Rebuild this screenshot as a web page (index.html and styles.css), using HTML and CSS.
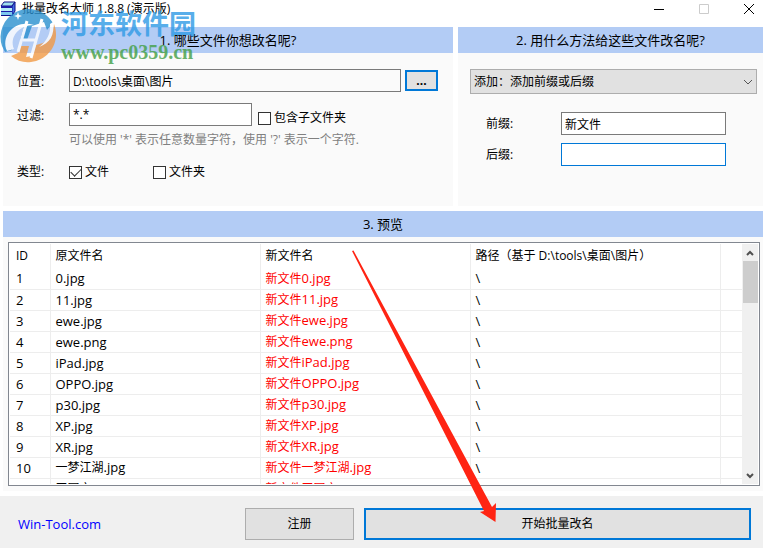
FILE: index.html
```
<!DOCTYPE html>
<html lang="zh-CN">
<head>
  <meta charset="UTF-8">
  <title>批量改名大师 1.8.8 (演示版)</title>
  <link rel="stylesheet" href="styles.css">
</head>
<body>

  <!-- Title bar -->
  <header class="titlebar">
    <svg class="app-icon" width="16" height="16" viewBox="0 0 16 16">
      <path d="M4 1h11l-3 4H1z" fill="#9fe0ee" stroke="#10108a"/>
      <path d="M12 5l3-4v9l-3 5z" fill="#3d6be0" stroke="#10108a"/>
      <path d="M1 5h11v2H1z" fill="#1c1ca8"/>
      <path d="M1 7h11v3H1z" fill="#b8eef8"/>
      <path d="M1 10h11v1H1z" fill="#1c1ca8"/>
      <path d="M1 11h11v3H1z" fill="#7cc8ee"/>
      <path d="M1 14h11v1H1z" fill="#10108a"/>
    </svg>
    <h1>批量改名大师 1.8.8 (演示版)</h1>
    <div class="window-buttons">
      <button type="button" aria-label="最小化"><svg width="10" height="10"><path d="M0 5.5h10" stroke="#000"/></svg></button>
      <button type="button" aria-label="最大化" disabled><svg width="10" height="10"><path d="M.5.5h9v9h-9z" fill="none" stroke="#ccc"/></svg></button>
      <button type="button" aria-label="关闭"><svg width="10" height="10"><path d="M0 0l10 10M10 0L0 10" stroke="#000"/></svg></button>
    </div>
  </header>

  <main class="content">
    <div class="options">
      <!-- 1. Files -->
      <section class="panel files">
        <h2>1. 哪些文件你想改名呢?</h2>
        <form class="files-form">
          <label class="field-label" for="path">位置:</label>
          <div class="line">
            <input class="text path" type="text" id="path" value="D:\tools\桌面\图片">
            <button class="browse" type="button">...</button>
          </div>
          <label class="field-label" for="filter">过滤:</label>
          <div class="line">
            <input class="text filter" type="text" id="filter" value="*.*">
            <label class="check low"><input type="checkbox">包含子文件夹</label>
          </div>
          <p class="hint">可以使用 '*' 表示任意数量字符，使用 '?' 表示一个字符.</p>
          <span class="type-label">类型:</span>
          <div class="line types">
            <label class="check"><input type="checkbox" checked>文件</label>
            <label class="check"><input type="checkbox">文件夹</label>
          </div>
        </form>
      </section>

      <!-- 2. Method -->
      <section class="panel method">
        <h2>2. 用什么方法给这些文件改名呢?</h2>
        <form class="method-form">
          <div class="select-wrap">
            <select aria-label="改名方法">
              <option>添加：添加前缀或后缀</option>
            </select>
            <svg width="10" height="6"><path d="M1 1l4 4 4-4" fill="none" stroke="#555"/></svg>
          </div>
          <div class="method-fields">
            <label for="prefix">前缀:</label>
            <input class="text" type="text" id="prefix" value="新文件">
            <label for="suffix">后缀:</label>
            <input class="text active" type="text" id="suffix">
          </div>
        </form>
      </section>
    </div>

    <!-- 3. Preview -->
    <section class="panel preview">
      <h2>3. 预览</h2>
      <div class="list">
        <div class="list-rows">
          <table>
            <colgroup>
              <col class="col-id"><col class="col-name"><col class="col-name"><col class="col-path"><col>
            </colgroup>
            <thead>
              <tr><th>ID</th><th>原文件名</th><th>新文件名</th><th>路径（基于 D:\tools\桌面\图片）</th><th></th></tr>
            </thead>
            <tbody>
              <tr><td>1</td><td>0.jpg</td><td class="new">新文件<span>0.jpg</span></td><td>\</td><td></td></tr>
              <tr><td>2</td><td>11.jpg</td><td class="new">新文件<span>11.jpg</span></td><td>\</td><td></td></tr>
              <tr><td>3</td><td>ewe.jpg</td><td class="new">新文件<span>ewe.jpg</span></td><td>\</td><td></td></tr>
              <tr><td>4</td><td>ewe.png</td><td class="new">新文件<span>ewe.png</span></td><td>\</td><td></td></tr>
              <tr><td>5</td><td>iPad.jpg</td><td class="new">新文件<span>iPad.jpg</span></td><td>\</td><td></td></tr>
              <tr><td>6</td><td>OPPO.jpg</td><td class="new">新文件<span>OPPO.jpg</span></td><td>\</td><td></td></tr>
              <tr><td>7</td><td>p30.jpg</td><td class="new">新文件<span>p30.jpg</span></td><td>\</td><td></td></tr>
              <tr><td>8</td><td>XP.jpg</td><td class="new">新文件<span>XP.jpg</span></td><td>\</td><td></td></tr>
              <tr><td>9</td><td>XR.jpg</td><td class="new">新文件<span>XR.jpg</span></td><td>\</td><td></td></tr>
              <tr><td>10</td><td class="cjk">一梦江湖<span>.jpg</span></td><td class="new">新文件一梦江湖<span>.jpg</span></td><td>\</td><td></td></tr>
              <tr><td></td><td class="cjk">王国之<span>.jpg</span></td><td class="new">新文件王国之<span>.jpg</span></td><td></td><td></td></tr>
            </tbody>
          </table>
        </div>
        <div class="scrollbar">
          <svg width="8" height="6"><path d="M1 5l3-3 3 3" fill="none" stroke="#505050" stroke-width="2"/></svg>
          <div class="thumb"></div>
          <svg width="8" height="6"><path d="M1 1l3 3 3-3" fill="none" stroke="#505050" stroke-width="2"/></svg>
        </div>
      </div>
    </section>
  </main>

  <footer class="footer">
    <a href="#">Win-Tool.com</a>
    <button class="register" type="button">注册</button>
    <button class="start" type="button">开始批量改名</button>
  </footer>

  <!-- Watermark -->
  <div class="watermark">
    <svg width="58" height="58" viewBox="0 0 58 58">
      <path d="M2 40A28 28 0 0 1 16 6C30 -1 46 5 53 17L47 24L44 16L32 20L27 34L20 34L24 20C14 24 10 34 12 44L5 46z" fill="#2a90cf"/>
      <path d="M54 18C61 36 49 54 31 56C24 57 17 55 11 50L18 47L21 40H29L26 51L32 50L36 39L43 37C49 33 53 27 54 18z" fill="#f29a45"/>
      <path d="M27 15l-9 31M42 13L31 52M23 34h13" fill="none" stroke="#fff" stroke-width="3"/>
      <path d="M7 45C0 29 16 13 34 19C19 19 9 31 14 43z" fill="#fff"/>
      <path d="M53 16c2 13-3 21-14 25 8-6 12-14 11-23z" fill="#fff"/>
      <path d="M18 6l1 3 3 1-3 1-1 3-1-3-3-1 3-1z" fill="#fff"/>
    </svg>
    <div class="watermark-text">
      <strong>河东软件园</strong>
      <b>www.pc0359.cn</b>
    </div>
  </div>

  <!-- Arrow to the start button -->
  <svg class="arrow" width="146" height="274" viewBox="0 0 146 274">
    <path d="M0 1L1.500 .5L140 257l4-4-.5 19-15.500-10 4-1z" fill="#ff2413"/>
  </svg>

</body>
</html>
```

FILE: styles.css
```
* {
  box-sizing: border-box;
}
body {
  display: flex;
  flex-direction: column;
  height: 100vh;
  margin: 0;
  position: relative;
  overflow: hidden;
  background: #fff;
  color: #000;
  font: 12px/18px "Open Sans", "Noto Sans CJK SC", sans-serif;
}
button, input, select {
  font: inherit;
  color: inherit;
  margin: 0;
}
h1, h2, p {
  margin: 0;
  font-weight: normal;
}

/* Title bar */
.titlebar {
  display: flex;
  height: 27px;
  flex: none;
}
.app-icon {
  margin-top: 1px;
}
.titlebar h1 {
  flex: 1;
  margin-left: 6px;
  font-size: 12px;
  line-height: 18px;
}
.window-buttons {
  display: flex;
  gap: 35px;
  height: 18px;
  padding-right: 9px;
}
.window-buttons button {
  display: flex;
  align-items: center;
  width: 10px;
  padding: 0;
  border: 0;
  background: none;
}

/* Panels */
.content {
  display: flex;
  flex-direction: column;
  flex: 1;
  gap: 5px;
  min-height: 0;
  padding-left: 3px;
}
.options {
  display: flex;
  gap: 5px;
  height: 179px;
  flex: none;
}
.panel {
  background: #fafafa;
}
.panel h2 {
  height: 26px;
  background: #b3ccf5;
  font-size: 13px;
  line-height: 26px;
  text-align: center;
}
.files {
  flex: 450;
}
.method {
  flex: 305;
}
.text {
  height: 23px;
  padding: 0 3px;
  border: 1px solid #7a7a7a;
  background: #fff;
}
.text.active {
  border-color: #0078d7;
}

/* Files form */
.files-form {
  display: grid;
  grid-template-columns: 52px 1fr;
  row-gap: 9px;
  align-items: center;
  padding: 16px 15px 0 14px;
}
.field-label {
  padding-top: 3px;
}
.line {
  display: flex;
  align-items: center;
}
.path {
  flex: 1;
  min-width: 0;
  background: #fafafa;
}
.filter {
  width: 183px;
}
.browse {
  width: 33px;
  height: 21px;
  margin-left: 4px;
  padding: 0;
  border: 2px solid #0078d7;
  background: #e1e1e1;
  font-weight: bold;
  line-height: 16px;
}
.check {
  display: flex;
  align-items: center;
  gap: 3px;
}
.check.low {
  margin: 8px 0 0 6px;
}
.check input {
  display: flex;
  align-items: center;
  justify-content: center;
  appearance: none;
  width: 13px;
  height: 13px;
  border: 1px solid #333;
  background: #fff;
}
.check input:checked::before {
  content: "";
  width: 9px;
  height: 5px;
  margin-bottom: 3px;
  border: solid #333;
  border-width: 0 0 1px 1px;
  transform: rotate(-45deg);
}
.hint {
  grid-column: 2;
  margin-top: -5px;
  color: #808080;
  white-space: nowrap;
}
.type-label, .types {
  margin-top: 5px;
}
.types {
  gap: 44px;
}

/* Method form */
.method-form {
  padding: 16px 6px 0 12px;
}
.select-wrap {
  position: relative;
}
.select-wrap select {
  appearance: none;
  display: block;
  width: 100%;
  height: 25px;
  padding: 0 3px;
  border: 1px solid #adadad;
  border-radius: 0;
  background: #e1e1e1;
}
.select-wrap svg {
  position: absolute;
  right: 4px;
  top: 10px;
  pointer-events: none;
}
.method-fields {
  display: grid;
  grid-template-columns: 75px 1fr;
  row-gap: 8px;
  align-items: center;
  padding: 18px 31px 0 16px;
}
.method-fields .text {
  min-width: 0;
}

/* Preview list */
.preview {
  display: flex;
  flex-direction: column;
  flex: 1;
  min-height: 0;
}
.list {
  display: flex;
  flex: 1;
  min-height: 0;
  margin: 5px 3px 5px 5px;
  padding: 1px;
  border: 1px solid #828790;
  background: #fff;
}
.list-rows {
  flex: 1;
  overflow: hidden;
}
table {
  width: 100%;
  table-layout: fixed;
  border-collapse: collapse;
}
.col-id {
  width: 40px;
}
.col-name {
  width: 210px;
}
.col-path {
  width: 250px;
}
th, td {
  height: 21px;
  padding: 0 0 0 5px;
  border-right: 1px solid #ededed;
  text-align: left;
  font-weight: normal;
  white-space: nowrap;
  line-height: 18px;
}
th {
  height: 24px;
  font-size: 12px;
}
td {
  border-bottom: 1px solid #ededed;
  font-size: 13px;
}
th:first-child, td:first-child {
  padding-left: 6px;
}
th:last-child, td:last-child {
  border-right: 0;
}
.new, .cjk {
  font-size: 12px;
}
.new {
  color: #f00;
}
td span {
  font-size: 13px;
}
.scrollbar {
  display: flex;
  flex-direction: column;
  align-items: center;
  width: 16px;
  background: #f0f0f0;
}
.scrollbar svg {
  margin: 6px 0 5px;
}
.thumb {
  width: 15px;
  height: 42px;
  margin-bottom: auto;
  background: #cdcdcd;
}

/* Footer */
.footer {
  display: flex;
  align-items: center;
  flex: none;
  height: 52px;
  margin-top: 5px;
  padding: 4px 12px 0 18px;
  background: #f0f0f0;
}
.footer a {
  width: 227px;
  color: #00f;
  font-size: 13px;
  text-decoration: none;
}
.footer button {
  height: 32px;
  padding: 0;
  background: #e1e1e1;
}
.register {
  width: 109px;
  border: 1px solid #adadad;
}
.start {
  flex: 1;
  margin-left: 10px;
  border: 2px solid #0078d7;
}

/* Overlays */
.watermark {
  position: absolute;
  left: 0;
  top: 6px;
  display: flex;
  gap: 3px;
  opacity: 0.8;
  pointer-events: none;
}
.watermark-text strong, .watermark-text b {
  display: block;
}
.watermark-text strong {
  color: #2f9be6;
  font-size: 27px;
  line-height: 36px;
}
.watermark-text b {
  color: #43a047;
  font: bold 20px/20px "Liberation Serif", serif;
}
.arrow {
  position: absolute;
  left: 352px;
  top: 250px;
  pointer-events: none;
}
```
